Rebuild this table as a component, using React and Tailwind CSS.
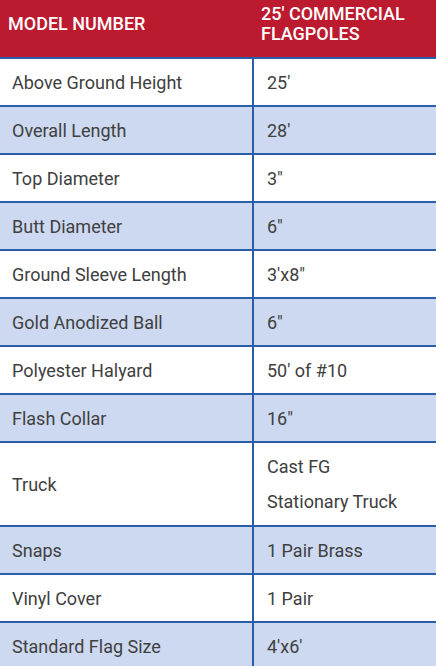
import React from 'react';

const rows = [
  { label: 'Above Ground Height', value: ['25\''] },
  { label: 'Overall Length', value: ['28\''] },
  { label: 'Top Diameter', value: ['3"'] },
  { label: 'Butt Diameter', value: ['6"'] },
  { label: 'Ground Sleeve Length', value: ['3\'x8"'] },
  { label: 'Gold Anodized Ball', value: ['6"'] },
  { label: 'Polyester Halyard', value: ['50\' of #10'] },
  { label: 'Flash Collar', value: ['16"'] },
  { label: 'Truck', value: ['Cast FG', 'Stationary Truck'] },
  { label: 'Snaps', value: ['1 Pair Brass'] },
  { label: 'Vinyl Cover', value: ['1 Pair'] },
  { label: 'Standard Flag Size', value: ['4\'x6\''] },
];

const App = () => {
  return (
    <div className="w-[436px] h-[666px] overflow-hidden bg-white font-['Roboto',sans-serif]">
      <div className="grid grid-cols-[252px_1fr] h-[57px] bg-[#bc1a2f] text-white font-medium text-[18px] leading-[20px] uppercase">
        <div className="flex items-center pl-[8px] pb-[9px]">Model Number</div>
        <div className="flex items-center pl-[9px] pb-[9px]">
          25' Commercial<br />Flagpoles
        </div>
      </div>

      {rows.map((row, i) => (
        <div
          key={row.label}
          className={`grid grid-cols-[252px_1fr] border-t-2 border-[#2b5ea8] text-[18px] text-[#404040] ${
            i % 2 === 1 ? 'bg-[#ccd9f0]' : 'bg-white'
          } ${row.value.length > 1 ? 'h-[84px]' : 'h-[48px]'}`}
        >
          <div className="flex items-center pl-[12px]">{row.label}</div>
          <div className="flex flex-col justify-center border-l-2 border-[#2b5ea8] pl-[13px]">
            {row.value.map((v) => (
              <div key={v} className="leading-[35px]">{v}</div>
            ))}
          </div>
        </div>
      ))}
    </div>
  );
};

export default App;
